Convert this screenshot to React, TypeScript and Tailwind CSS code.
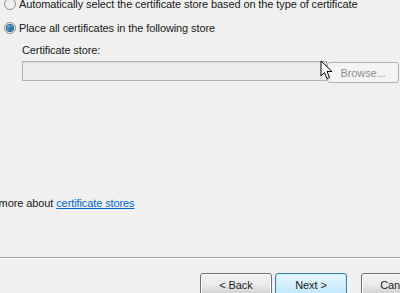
import React from 'react';

function Radio({ checked }: { checked?: boolean }) {
  return (
    <span className="flex h-[12px] w-[12px] shrink-0 items-center justify-center rounded-full border border-[#8e8f8f] bg-gradient-to-br from-[#e6e6e6] to-[#fbfbfb]">
      {checked && (
        <span className="h-[6px] w-[6px] rounded-full bg-gradient-to-br from-[#5fb4e3] to-[#125a8b] ring-1 ring-[#1c5c88]" />
      )}
    </span>
  );
}

function WizButton({ label, focused }: { label: string; focused?: boolean }) {
  return (
    <button
      className={
        'flex h-[23px] w-[72px] shrink-0 items-center justify-center rounded-[3px] border text-[#1e1e1e] ' +
        (focused
          ? 'border-[#3c7fb1] bg-gradient-to-b from-[#eaf6fd] to-[#bee6fd] shadow-[inset_0_0_0_1px_#c7ebfb]'
          : 'border-[#707070] bg-gradient-to-b from-[#f2f2f2] via-[#ebebeb] to-[#cfcfcf] shadow-[inset_0_0_0_1px_#fcfcfc]')
      }
    >
      {label}
    </button>
  );
}

export default function App() {
  return (
    <div
      className="relative h-[293px] w-[400px] overflow-hidden bg-[#f0f0f0] text-[11px] leading-[16px] tracking-[-0.1px] text-[#1a1a1a]"
      style={{ fontFamily: '"Liberation Sans", Arial, sans-serif' }}
    >
      <div className="flex flex-col pl-[4px]">
        <div className="-mt-[4px] flex h-[16px] items-center gap-[3px] whitespace-nowrap">
          <Radio />
          <span>Automatically select the certificate store based on the type of certificate</span>
        </div>
        <div className="mt-[8px] flex h-[16px] items-center gap-[3px] whitespace-nowrap">
          <Radio checked />
          <span>Place all certificates in the following store</span>
        </div>
      </div>

      <div className="ml-[22px] mt-[6px] flex flex-col">
        <span className="h-[16px]">Certificate store:</span>
        <div className="mt-[3px] flex items-start">
          <div className="h-[20px] w-[305px] shrink-0 border border-[#b5b5b5] bg-[#ececec] shadow-[inset_0_1px_0_#dadada]" />
          <div className="mt-[1px] flex h-[21px] w-[72px] shrink-0 items-center justify-center rounded-[3px] border border-[#adb2b5] bg-[#f4f4f4] text-[#8d8d8d]">
            Browse...
          </div>
        </div>
      </div>

      <div className="-ml-[32px] mt-[112px] h-[16px] whitespace-nowrap">
        Learn more about{' '}
        <span className="text-[#0066cc] underline decoration-[#0066cc]">certificate stores</span>
      </div>

      <div className="mt-[46px] h-[1px] w-full bg-[#a0a0a0]" />
      <div className="h-[1px] w-full bg-white" />

      <div className="ml-[200px] mt-[14px] flex gap-[3px]">
        <WizButton label="< Back" />
        <WizButton label="Next >" focused />
        <span className="w-[8px] shrink-0" />
        <WizButton label="Cancel" />
      </div>

      {/* mouse pointer */}
      <svg className="absolute left-[320px] top-[60px]" width="13" height="21" viewBox="0 0 13 21">
        <path d="M1 1 L1 16 L4.5 12.5 L7 18.5 L9.5 17.5 L7 11.5 L12 11.5 Z" fill="#fff" stroke="#000" strokeWidth="1" strokeLinejoin="round" />
      </svg>
    </div>
  );
}
